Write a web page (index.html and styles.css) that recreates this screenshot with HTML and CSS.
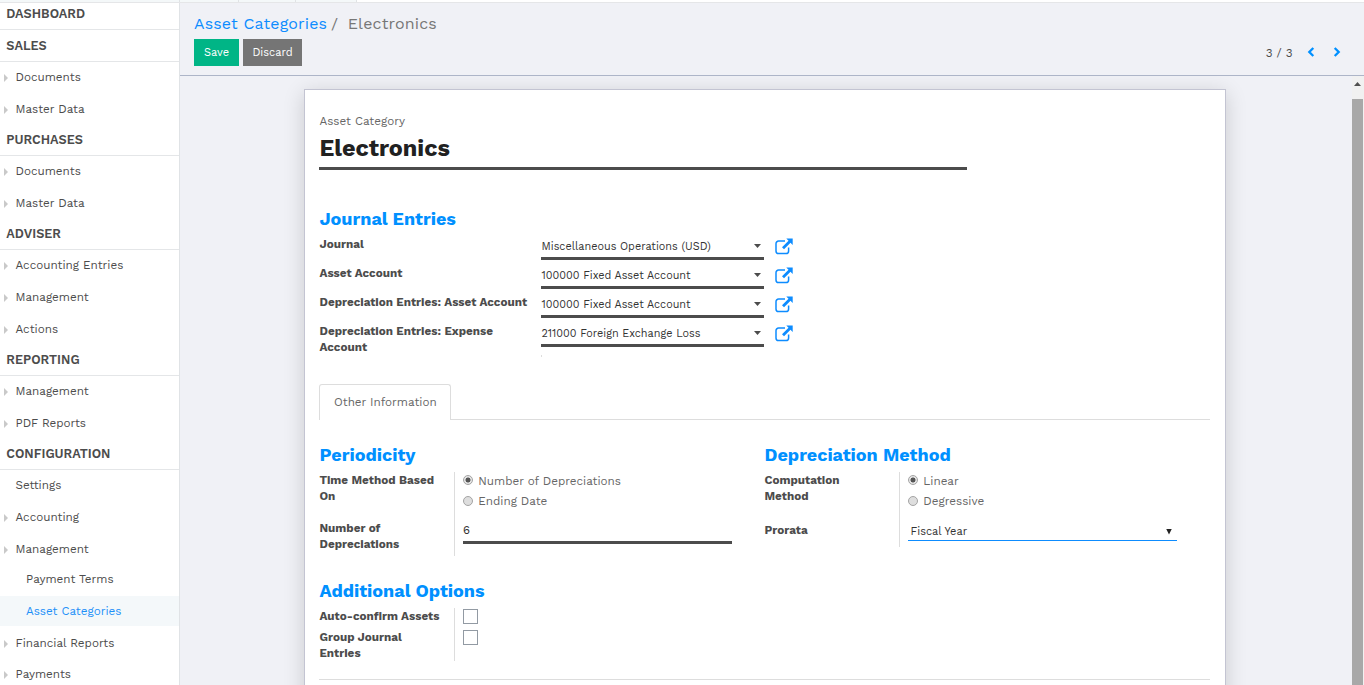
FILE: index.html
```
<!DOCTYPE html>
<html lang="en">
<head>
<meta charset="utf-8">
<title>Asset Categories / Electronics</title>
<link rel="stylesheet" href="styles.css">
</head>
<body>
<svg class="defs" width="0" height="0" aria-hidden="true">
  <symbol id="ext" viewBox="0 0 18 17">
    <path d="M10 3.1H3.6A2.6 2.6 0 0 0 1 5.700V12.900A2.600 2.600 0 0 0 3.600 15.500H11A2.600 2.600 0 0 0 13.600 12.900V9.500" fill="none" stroke="currentColor" stroke-width="1.500"/>
    <path d="M11.300 0.500H17.700V6.900L15.500 4.700L9 11.200L7 9.200L13.500 2.700Z" fill="currentColor"/>
  </symbol>
</svg>
<div class="topstrip"><i class="wide"></i><i class="t1"></i><i class="t2"></i><i class="t3"></i></div>
<div class="app">
  <nav class="sidebar">
    <h4 class="first">DASHBOARD</h4>
    <h4>SALES</h4>
    <ul><li class="sub">Documents</li><li class="sub">Master Data</li></ul>
    <h4>PURCHASES</h4>
    <ul><li class="sub">Documents</li><li class="sub">Master Data</li></ul>
    <h4>ADVISER</h4>
    <ul><li class="sub">Accounting Entries</li><li class="sub">Management</li><li class="sub">Actions</li></ul>
    <h4>REPORTING</h4>
    <ul><li class="sub">Management</li><li class="sub">PDF Reports</li></ul>
    <h4>CONFIGURATION</h4>
    <ul><li>Settings</li><li class="sub">Accounting</li><li class="sub">Management</li></ul>
    <ul class="nested"><li>Payment Terms</li><li class="active">Asset Categories</li></ul>
    <ul class="after"><li class="sub">Financial Reports</li><li class="sub">Payments</li></ul>
  </nav>
  <main class="main">
    <header class="panel">
      <div class="crumbs"><a>Asset Categories</a><span class="slash">/</span><span class="here">Electronics</span></div>
      <div class="tools">
        <button class="btn save">Save</button><button class="btn discard">Discard</button>
        <div class="pager"><span>3 / 3</span>
          <svg class="chev" width="8" height="10" viewBox="0 0 8 10"><path d="M6.300 1L2.300 5L6.300 9" fill="none" stroke="currentColor" stroke-width="2.300"/></svg>
          <svg class="chev" width="8" height="10" viewBox="0 0 8 10"><path d="M1.700 1L5.700 5L1.700 9" fill="none" stroke="currentColor" stroke-width="2.300"/></svg>
        </div>
      </div>
    </header>
    <div class="content">
      <section class="sheet">
        <div class="caption">Asset Category</div>
        <div class="name">Electronics</div>

        <h2 class="journal-title">Journal Entries</h2>
        <div class="journal">
          <label>Journal</label><div class="pick">Miscellaneous Operations (USD)</div><svg class="ext"><use href="#ext"/></svg>
          <label>Asset Account</label><div class="pick">100000 Fixed Asset Account</div><svg class="ext"><use href="#ext"/></svg>
          <label>Depreciation Entries: Asset Account</label><div class="pick">100000 Fixed Asset Account</div><svg class="ext"><use href="#ext"/></svg>
          <label>Depreciation Entries: Expense<br>Account</label><div class="pick">211000 Foreign Exchange Loss</div><svg class="ext"><use href="#ext"/></svg>
        </div>
        <div class="speck"></div>

        <div class="tabs"><div class="tab">Other Information</div></div>

        <div class="columns">
          <div class="group">
            <h2>Periodicity</h2>
            <div class="body tall">
              <div class="labels"><label>Time Method Based<br>On</label><label class="second">Number of<br>Depreciations</label></div>
              <div class="fields">
                <div class="radio on">Number of Depreciations</div>
                <div class="radio">Ending Date</div>
                <div class="number">6</div>
              </div>
            </div>
          </div>
          <div class="group">
            <h2>Depreciation Method</h2>
            <div class="body short">
              <div class="labels"><label>Computation<br>Method</label><label class="third">Prorata</label></div>
              <div class="fields">
                <div class="radio on">Linear</div>
                <div class="radio">Degressive</div>
                <div class="select">Fiscal Year</div>
              </div>
            </div>
          </div>
        </div>

        <div class="group options">
          <h2>Additional Options</h2>
          <div class="body boxes">
            <div class="labels"><label>Auto-confirm Assets</label><label class="next">Group Journal<br>Entries</label></div>
            <div class="fields"><div class="check"></div><div class="check"></div></div>
          </div>
        </div>
        <div class="rule"></div>
      </section>
      <div class="scrollbar"><i class="up"></i><i class="thumb"></i></div>
    </div>
  </main>
</div>
</body>
</html>
```
FILE: styles.css
```
* { box-sizing: border-box; }
html, body { margin: 0; height: 685px; overflow: hidden; }
body { background: #fff; color: #4c4c4c; font: 11.7px/16px "Work Sans", Inter, sans-serif; }
h2, h4, ul { margin: 0; padding: 0; }
ul { list-style: none; }
.defs { position: absolute; }

.topstrip { display: flex; height: 3px; border-bottom: 1px solid #e5e6e8; }
.topstrip i { border-right: 1px solid #e0e3e5; background: #f4f8f9; }
.topstrip .wide { width: 180px; }
.topstrip .t1 { width: 59px; }
.topstrip .t2 { width: 57px; }
.topstrip .t3 { width: 61px; }

.app { display: flex; height: 682px; }
.sidebar { width: 180px; flex: none; border-right: 1px solid #e0e3e6; overflow: hidden; background: #fff; }
.sidebar h4 { height: 32px; padding-left: 6.3px; line-height: 31px; font-size: 12.7px; font-weight: 600; border-bottom: 1px solid #e4e6e8; }
.sidebar h4.first { height: 27px; line-height: 21px; }
.sidebar ul { display: flex; flex-direction: column; gap: 2px; }
.sidebar li { height: 30px; line-height: 30px; padding-left: 15.5px; font-size: 11.7px; display: flex; align-items: center; }
.sidebar li.sub { padding-left: 4px; }
.sidebar li.sub::before { content: ""; border: 4px solid transparent; border-left-color: #c9c9c9; border-right: 0; margin: 2px 7.5px 0 0; }
.sidebar .nested li { padding-left: 26px; }
.sidebar .nested .active { background: #f4f8fa; color: #1e90f8; }
.sidebar .after { margin-top: 2px; gap: 1px; }

.main { flex: 1; display: flex; flex-direction: column; min-width: 0; background: #f0f1f6; }
.panel { height: 73px; flex: none; padding: 11px 23.5px 0 14px; border-bottom: 1px solid #adb5c8; }
.crumbs { height: 20px; line-height: 20px; font-size: 16px; letter-spacing: .15px; color: #777; display: flex; }
.crumbs a { color: #0d8cff; }
.slash { margin: 0 9.5px 0 4px; }
.tools { display: flex; margin-top: 5px; }
.btn { height: 27px; border: 0; padding: 0; color: #fff; font: 11px/27px "Work Sans", Inter, sans-serif; }
.save { width: 45px; background: #00b586; }
.discard { width: 59px; margin-left: 4px; background: #757575; }
.pager { margin-left: auto; display: flex; align-items: center; }
.pager span { margin-right: 14.5px; }
.chev { color: #0090ff; margin: -2px 17.5px 0 0; }
.chev:last-child { margin-right: 0; }

.content { flex: 1; display: flex; min-height: 0; overflow: hidden; }
.sheet { width: 922px; height: 700px; flex: none; margin: 13px 0 0 124px; padding: 0 15px 0 14px; background: #fff; border: 1px solid #c3c4d2; box-shadow: 0 4px 20px rgba(0,0,0,.16); }
.scrollbar { width: 12px; margin-left: auto; background: #f1f1f1; }
.scrollbar .up { display: flex; height: 23px; padding: 6px 0 0 2px; }
.scrollbar .up::after { content: ""; width: 7px; height: 4px; background: #505050; clip-path: polygon(50% 0, 100% 100%, 0 100%); }
.scrollbar .thumb { display: block; height: 600px; width: 11px; background: #a8a8a8; }

.caption { height: 39px; padding-top: 23px; color: #666; }
.name { width: 648px; height: 41px; padding: 6px 0 0 .5px; font-size: 23.4px; line-height: 26px; font-weight: 700; color: #212121; border-bottom: 3px solid #4c4c4c; }
.caption, .journal-title, .group h2, label { padding-left: .5px; }
h2 { font-size: 18px; line-height: 22px; height: 22px; font-weight: 700; color: #0090ff; white-space: nowrap; }
.journal-title { margin-top: 38px; }
.journal { display: grid; grid-template-columns: 222px 223px 29px; grid-auto-rows: 29px; padding-top: 5px; }
label { display: block; font-size: 11.7px; line-height: 16px; font-weight: 700; white-space: nowrap; }
.journal label { padding-top: 1px; }
.pick { height: 25px; padding-left: .5px; line-height: 23px; font-size: 10.85px; color: #333; border-bottom: 3px solid #4c4c4c; display: flex; justify-content: space-between; align-items: center; }
.pick::after { content: ""; width: 7px; height: 4px; background: #4c4c4c; clip-path: polygon(0 0, 100% 0, 50% 100%); margin-right: 3px; }
.ext { width: 18px; height: 17px; margin: 3px 0 0 11px; color: #0d8cff; }
.speck { width: 1px; height: 2px; margin: 4px 0 0 222px; background: #ddd; }

.tabs { height: 36px; margin-top: 27px; border-bottom: 1px solid #ddd; }
.tab { width: 132px; height: 36px; line-height: 35px; padding-left: 14px; color: #666; background: #fff; border: 1px solid #ddd; border-bottom: 0; border-radius: 3px 3px 0 0; }
.columns { display: grid; grid-template-columns: 445px 445px; padding-top: 24px; }
.body { display: flex; margin-top: 6px; }
.labels { width: 136px; flex: none; border-right: 1px solid #ddd; }
.tall { height: 84px; }
.short { height: 75px; }
.boxes { height: 53px; }
.second { margin-top: 16px; }
.third { margin-top: 18px; }
.next { margin-top: 5px; }
.fields { padding-left: 8px; }
.radio { height: 20px; line-height: 18px; display: flex; align-items: center; color: #666; }
.radio:first-child { margin-top: -1px; }
.radio::before { content: ""; width: 10px; height: 10px; border-radius: 50%; border: 1px solid #a4a4a4; background: #dedede; margin: -1px 5.3px 0 0; flex: none; }
.radio.on::before { background: radial-gradient(circle, #555 0 2.2px, #e4e4e4 2.8px); margin-top: -3px; }
.radio::before { box-sizing: border-box; }
.radio { margin-left: 0; }
.number { width: 269px; height: 24px; margin-top: 9px; line-height: 20px; color: #333; border-bottom: 3px solid #4c4c4c; font-size: 11.5px; }
.select { width: 269px; height: 19px; margin-top: 11px; padding: 1px 5px 0 2.5px; line-height: 18px; font-size: 11px; color: #333; border-bottom: 1px solid #0d8cff; display: flex; justify-content: space-between; align-items: center; }
.select::after { content: ""; width: 6px; height: 6px; background: #222; clip-path: polygon(0 0, 100% 0, 50% 100%); }
.options { margin-top: 24px; }
.check { width: 15px; height: 15px; margin: 1px 0 6px; border: 1px solid #929aa3; background: #fff; }
.rule { height: 1px; margin-top: 18px; background: #ddd; }

*::before, *::after { box-sizing: border-box; }
```
